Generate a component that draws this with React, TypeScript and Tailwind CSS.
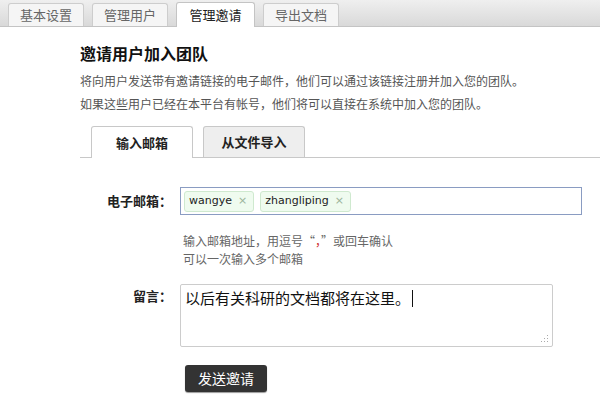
const cjk = "font-['Noto_Sans_CJK_SC',sans-serif]";

const topTabs = ["基本设置", "管理用户", "管理邀请", "导出文档"];
const activeTop = 2;

function Chip({ label }: { label: string }) {
  return (
    <span className="flex h-[21px] items-center gap-[6px] rounded-[3px] border border-[#cfe9cf] bg-[#effbef] pl-[4px] pr-[6px]">
      <span className="font-['DejaVu_Sans',sans-serif] text-[11px] text-[#222]">{label}</span>
      <span className="font-['DejaVu_Sans',sans-serif] text-[11px] text-[#9cb49c]">×</span>
    </span>
  );
}

export default function App() {
  return (
    <div className={`h-[400px] w-[600px] overflow-hidden bg-white ${cjk}`}>
      {/* top tab bar */}
      <div className="flex h-[27px] items-end gap-[8px] border-b border-[#c4c4c4] bg-gradient-to-b from-[#efefef] to-[#d9d9d9] pl-[8px]">
        {topTabs.map((t, i) => (
          <div
            key={t}
            className={
              i === activeTop
                ? "-mb-px flex h-[25px] w-[79px] items-center justify-center rounded-t-[3px] border border-b-0 border-[#c4c4c4] bg-white text-[13px] text-[#222]"
                : "flex h-[23px] w-[76px] items-center justify-center rounded-t-[3px] border border-b-0 border-[#cdcdcd] bg-[#f5f5f5] text-[13px] text-[#666]"
            }
          >
            {t}
          </div>
        ))}
      </div>

      <div className="pl-[80px]">
        <h1 className="mt-[14px] text-[16px] font-bold leading-[24px] text-[#111]">邀请用户加入团队</h1>
        <p className="mt-[4px] text-[12px] leading-[23px] text-[#555]">
          将向用户发送带有邀请链接的电子邮件，他们可以通过该链接注册并加入您的团队。
        </p>
        <p className="text-[12px] leading-[23px] text-[#555]">
          如果这些用户已经在本平台有帐号，他们将可以直接在系统中加入您的团队。
        </p>

        {/* sub tabs */}
        <div className="mt-[11px] flex h-[32px] items-end gap-[10px] border-b border-[#c8c8c8] pl-[11px]">
          <div className="-mb-px flex h-[32px] w-[102px] items-center justify-center rounded-t-[3px] border border-b-0 border-[#c8c8c8] bg-white text-[13px] font-bold text-[#222]">
            输入邮箱
          </div>
          <div className="flex h-[31px] w-[102px] items-center justify-center rounded-t-[3px] border border-b-0 border-[#c8c8c8] bg-[#eeeeee] text-[13px] font-bold text-[#222]">
            从文件导入
          </div>
        </div>

        {/* email row */}
        <div className="mt-[29px] flex items-center gap-[8px]">
          <label className="w-[92px] text-right text-[13px] font-bold text-[#222]">电子邮箱：</label>
          <div className="flex h-[28px] w-[402px] items-center gap-[6px] border border-[#8a9cc2] px-[3px]">
            <Chip label="wangye" />
            <Chip label="zhangliping" />
          </div>
        </div>

        <div className="ml-[103px] mt-[17px] text-[12px] leading-[18px] text-[#666]">
          <p>
            输入邮箱地址，用逗号“<span className="text-[#d03030]">，</span>”或回车确认
          </p>
          <p>可以一次输入多个邮箱</p>
        </div>

        {/* message row */}
        <div className="mt-[16px] flex items-start gap-[8px]">
          <label className="w-[92px] pt-[2px] text-right text-[13px] font-bold text-[#222]">留言：</label>
          <div className="relative h-[63px] w-[373px] rounded-[2px] border border-[#cccccc] px-[4px] py-[2px] text-[15px] leading-[22px] text-[#111]">
            以后有关科研的文档都将在这里。
            <span className="ml-[2px] inline-block h-[17px] w-px translate-y-[3px] bg-[#111]" />
            <svg className="absolute bottom-[3px] right-[3px]" width="8" height="8" viewBox="0 0 8 8">
              <rect x="6" y="0" width="1" height="1" fill="#aaa" />
              <rect x="3" y="3" width="1" height="1" fill="#aaa" />
              <rect x="6" y="3" width="1" height="1" fill="#aaa" />
              <rect x="0" y="6" width="1" height="1" fill="#aaa" />
              <rect x="3" y="6" width="1" height="1" fill="#aaa" />
              <rect x="6" y="6" width="1" height="1" fill="#aaa" />
            </svg>
          </div>
        </div>

        <button className="ml-[105px] mt-[18px] flex h-[27px] w-[82px] items-center justify-center rounded-[3px] bg-[#333333] text-[14px] text-white shadow-[0_1px_1px_rgba(0,0,0,0.4)]">
          发送邀请
        </button>
      </div>
    </div>
  );
}
